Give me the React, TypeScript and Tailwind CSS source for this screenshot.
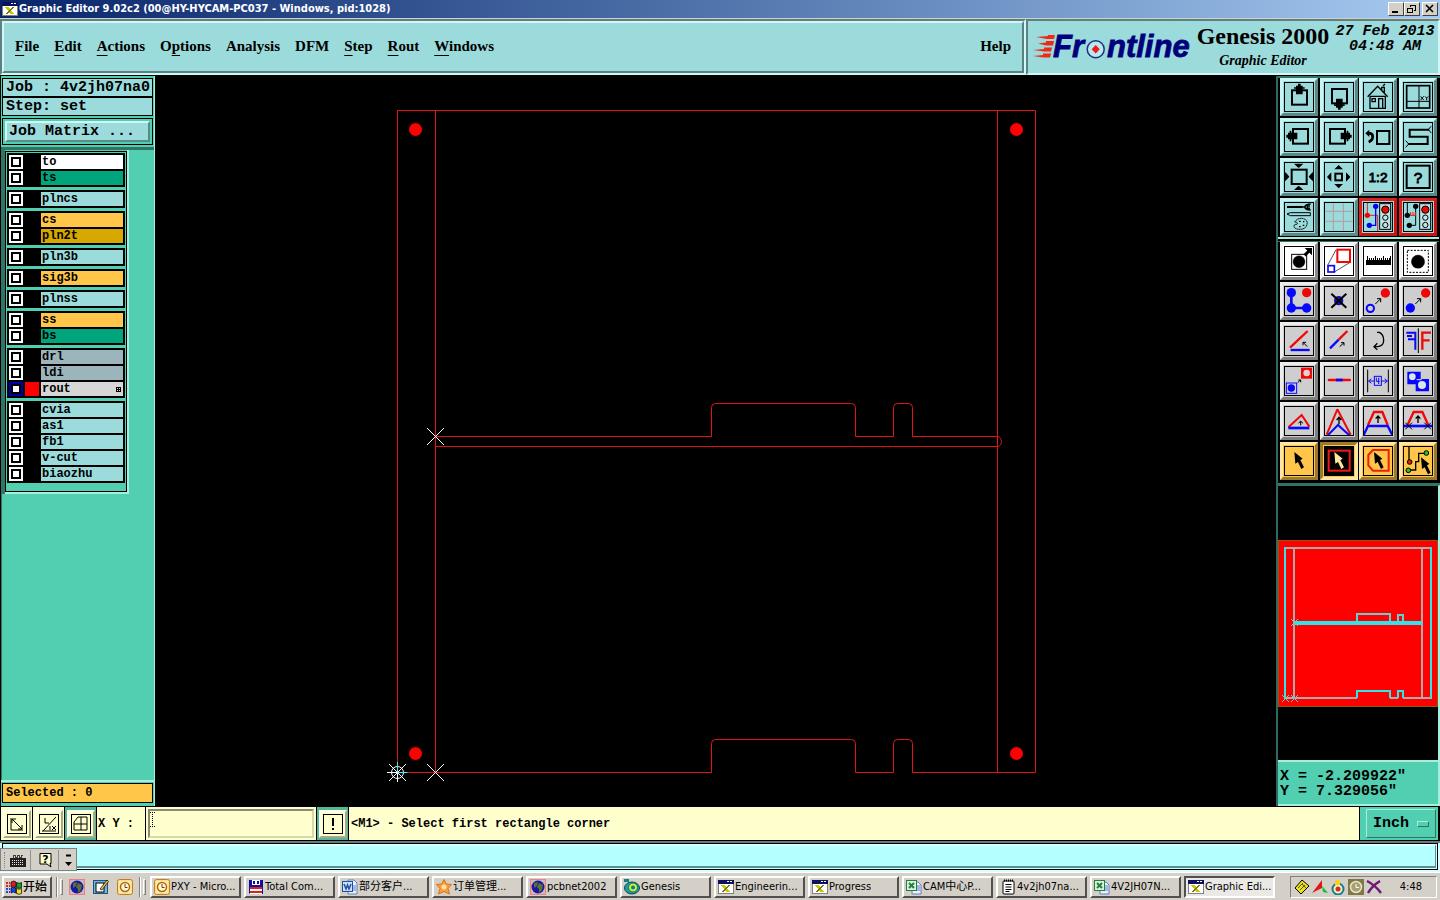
import React from "react";

const mono = "font-['Liberation_Mono','DejaVu_Sans_Mono',monospace]";
const serif = "font-['Liberation_Serif',serif]";
const tahoma = "font-['DejaVu_Sans_Condensed','DejaVu_Sans','Noto_Sans_CJK_SC',sans-serif]";

/* ---------- Title bar ---------- */

function WindowGlyph() {
  return (
    <svg viewBox="0 0 16 16" className="size-4 shrink-0" shapeRendering="crispEdges" aria-hidden="true">
      <rect x="0" y="1" width="16" height="14" fill="#808080" />
      <rect x="1" y="5" width="14" height="9" fill="#fff" />
      <rect x="0" y="1" width="16" height="4" fill="#101060" />
      <rect x="9" y="2" width="2" height="1" fill="#fff" />
      <rect x="12" y="2" width="2" height="1" fill="#fff" />
      <path d="M4 6 10 13M5 6 11 13" stroke="#c8c800" strokeWidth="2" />
      <path d="M11.500 6 4.500 13" stroke="#75751a" strokeWidth="1.500" />
    </svg>
  );
}

function CaptionButton({ label, children }: { label: string; children: React.ReactNode }) {
  return (
    <button
      aria-label={label}
      className="h-[14px] w-4 border border-t-white border-l-white border-r-[#404040] border-b-[#404040] bg-[#d4d0c8]"
    >
      <svg viewBox="0 0 14 12" className="h-3 w-[14px]" fill="none" stroke="#000" shapeRendering="crispEdges">
        {children}
      </svg>
    </button>
  );
}

function TitleBar() {
  return (
    <div className="flex h-[19px] items-center border-b border-[#d4d0c8] bg-linear-to-r from-[#0a246a] to-[#a6caf0] pr-[2px] pl-[2px]">
      <WindowGlyph />
      <h1 className={`${tahoma} ml-px flex-1 text-[11px] leading-[18px] font-bold whitespace-nowrap text-white`}>
        Graphic Editor 9.02c2 (00@HY-HYCAM-PC037 - Windows, pid:1028)
      </h1>
      <div className="flex">
        <CaptionButton label="Minimize">
          <path d="M3 9h6" strokeWidth="2" />
        </CaptionButton>
        <CaptionButton label="Restore">
          <path d="M5 2h6M5 5.500h-3v4h5v-4h-3M5.500 4v-2M10.500 2v5h-2M2 5h6" strokeWidth="1" />
        </CaptionButton>
        <div className="w-[2px]" />
        <CaptionButton label="Close">
          <path d="M3 2l7 7M10 2l-7 7" strokeWidth="1.600" shapeRendering="auto" />
        </CaptionButton>
      </div>
    </div>
  );
}

/* ---------- Header ---------- */

const menus = [
  ["", "F", "ile"],
  ["", "E", "dit"],
  ["", "A", "ctions"],
  ["O", "p", "tions"],
  ["Analysis", "", ""],
  ["DFM", "", ""],
  ["", "S", "tep"],
  ["", "R", "out"],
  ["", "W", "indows"],
];

const sunken = "border-2 border-t-[#5f8080] border-l-[#5f8080] border-r-[#d0f8f8] border-b-[#d0f8f8]";
const raised = "border-2 border-t-[#d0f8f8] border-l-[#d0f8f8] border-r-[#5a8080] border-b-[#5a8080]";

function FrontlineLogo() {
  return (
    <svg viewBox="1030 22 164 48" className="h-12 w-[164px] shrink-0 overflow-visible" role="img" aria-label="Frontline">
      <g fill="#f02818">
        <path d="M1036 37 1048 36V35l7 0-1 4h-7z" />
        <path d="M1038 43.500 1046 42.500v-1.500h8l-1 4.500h-7z" />
        <path d="M1033 50 1044 49v-1.500h8l-1 4h-7z" />
        <path d="M1033 56 1043 55v-1.500h8l-1 4h-7z" />
      </g>
      <g
        fill="#00007c"
        stroke="#00007c"
        strokeWidth=".8"
        fontFamily="Liberation Sans, sans-serif"
        fontWeight="bold"
        fontStyle="italic"
        fontSize="31"
      >
        <text x="1053" y="57">Fr</text>
        <text x="1107" y="57">ntline</text>
      </g>
      <circle cx="1095.700" cy="49.300" r="8.500" fill="#b8e8e8" stroke="#20308c" strokeWidth="1.500" />
      <path d="M1095.700 45l4 4.300-4 4.300-4-4.300z" fill="#f01818" />
    </svg>
  );
}

function Header() {
  return (
    <header className="flex h-14 bg-[#9cdbdb]">
      <div className={`${sunken} flex min-w-0 flex-1`}>
        <nav className={`${raised} ${serif} flex flex-1 items-center gap-[15px] px-[11px] pb-[2px] text-[15px] font-bold`}>
          {menus.map(([before, key, after]) => (
            <button key={before + key + after} className="leading-5">
              {before}
              {key && <span className="underline underline-offset-4">{key}</span>}
              {after}
            </button>
          ))}
          <button className="ml-auto leading-5">Help</button>
        </nav>
      </div>
      <div className={`${sunken} flex shrink-0 pl-[2px]`}>
        <div className="pt-px">
          <FrontlineLogo />
        </div>
        <div className={`${serif} flex w-[138px] flex-col items-center`}>
          <div className="text-2xl leading-[30px] font-bold whitespace-nowrap">Genesis 2000</div>
          <div className="text-sm leading-5 font-bold italic">Graphic Editor</div>
        </div>
        <div className={`${mono} w-[106px] pt-[3px] text-center text-[15px] leading-[15px] font-bold whitespace-nowrap italic`}>
          <div>27 Feb 2013</div>
          <div>04:48 AM</div>
        </div>
      </div>
    </header>
  );
}

/* ---------- Layer panel ---------- */

type Layer = { name: string; tone: string; active?: boolean };
const aqua = "bg-[#9cdbdb]";
const amber = "bg-[#ffc64a]";
const layerGroups: Layer[][] = [
  [{ name: "to", tone: "bg-white" }, { name: "ts", tone: "bg-[#00a57b]" }],
  [{ name: "plncs", tone: aqua }],
  [{ name: "cs", tone: amber }, { name: "pln2t", tone: "bg-[#d6a800]" }],
  [{ name: "pln3b", tone: aqua }],
  [{ name: "sig3b", tone: amber }],
  [{ name: "plnss", tone: aqua }],
  [{ name: "ss", tone: amber }, { name: "bs", tone: "bg-[#00a57b]" }],
  [
    { name: "drl", tone: "bg-[#9cb5bd]" },
    { name: "ldi", tone: "bg-[#9cb5bd]" },
    { name: "rout", tone: "bg-[#d6d6d6]", active: true },
  ],
  [
    { name: "cvia", tone: aqua },
    { name: "as1", tone: aqua },
    { name: "fb1", tone: aqua },
    { name: "v-cut", tone: aqua },
    { name: "biaozhu", tone: aqua },
  ],
];

function LayerRow({ layer }: { layer: Layer }) {
  return (
    <label className="flex h-4 items-center gap-[2px] pr-[2px] pl-[2px]">
      <input
        type="checkbox"
        defaultChecked={layer.active}
        className={`size-[14px] shrink-0 appearance-none border-2 bg-white shadow-[inset_0_0_0_2px_#000] ${
          layer.active ? "border-[#0000a8]" : "border-white"
        }`}
      />
      <span className={`size-[14px] shrink-0 ${layer.active ? "bg-[#ff0000]" : "bg-black"}`} />
      <span className={`flex h-[14px] flex-1 items-center justify-between pr-[2px] pl-px text-xs leading-[14px] font-bold ${layer.tone}`}>
        {layer.name}
        {layer.active && (
          <svg viewBox="0 0 5 5" className="size-[5px]" shapeRendering="crispEdges" aria-hidden="true">
            <path d="M.5.5h4v4h-4zM2.500 0v5M0 2.500h5" fill="none" stroke="#000" />
          </svg>
        )}
      </span>
    </label>
  );
}

function LayerPanel() {
  return (
    <aside className={`${mono} flex w-[155px] shrink-0 flex-col border-r border-l border-l-black border-r-[#a5efde] bg-[#52ceb0]`}>
      <div className="flex flex-col gap-[2px] border-b-[3px] border-[#2f7464] px-px pt-[2px] pb-[2px]">
        <div className="border border-black bg-[#9cdbdb] text-[15px] leading-[17px] font-bold whitespace-nowrap">
          <div className="border-b-2 border-black px-[3px]">Job : 4v2jh07na0</div>
          <div className="px-[3px]">Step: set</div>
        </div>
        <div className="flex border border-black p-[2px]">
          <button className="h-[21px] w-full border-2 border-t-[#d0f8f8] border-r-[#5a8a8a] border-b-[#5a8a8a] border-l-[#d0f8f8] bg-[#9cdbdb] px-[2px] text-left text-[15px] leading-[17px] font-bold">
            Job Matrix ...
          </button>
        </div>
      </div>
      <div className="flex flex-1 flex-col">
        <div className="flex">
          <div className="w-1 bg-[#2f7464]" />
          <div className="w-[124px] border-r-2 border-b-2 border-[#a5efde] pt-px">
            <fieldset className="flex flex-col gap-[3px] border border-black px-px pt-px pb-2">
              {layerGroups.map((group) => (
                <div key={group[0].name} className="bg-black py-px">
                  {group.map((layer) => (
                    <LayerRow key={layer.name} layer={layer} />
                  ))}
                </div>
              ))}
            </fieldset>
          </div>
        </div>
        <div className="w-px flex-1 bg-[#2f7464]" />
      </div>
      <div className="border-t-2 border-[#a5efde] px-px pt-px pb-[3px]">
        <div className="border border-black bg-[#ffc64a] px-[3px] text-xs leading-[18px] font-bold">Selected : 0</div>
      </div>
    </aside>
  );
}

/* ---------- Board drawing ---------- */

function BoardCanvas() {
  return (
    <main className="flex min-w-0 flex-1 flex-col bg-black">
      <svg viewBox="155 76 1121 730" className="min-h-0 w-full flex-1 basis-0" fill="none" role="img" aria-label="Rout layer drawing">
        <g stroke="#e01414" strokeWidth="1">
          <path d="M435.500 772.500H397.500V110.500H1035.500V772.500H912.500V743.500q0-4-4-4h-11q-4 0-4 4V772.500H855.500V743.500q0-4-4-4H715.500q-4 0-4 4V772.500H397.500" />
          <path d="M435.500 110V772M997.500 110V772" />
          <path d="M435.500 436.500H711.500V407.500q0-4 4-4H851.500q4 0 4 4V436.500H893.500V407.500q0-4 4-4h11q4 0 4 4V436.500H997.500a4 5 0 0 1 0 10H435.500" />
        </g>
        <g fill="#f00">
          <circle cx="415.500" cy="129.500" r="6.500" />
          <circle cx="1016.500" cy="129.500" r="6.500" />
          <circle cx="415.500" cy="753.500" r="6.500" />
          <circle cx="1016.500" cy="753.500" r="6.500" />
        </g>
        <g stroke="#fff" strokeWidth="1">
          <path d="M427 428l17 17M444 428l-17 17M427 764l17 17M444 764l-17 17" />
          <path d="M389 764l17 17M406 764l-17 17M387 772.500h10M397.500 762v20" />
          <circle cx="397.500" cy="772.500" r="6" />
        </g>
        <path d="M397.500 772.500h10M397.500 762v10" stroke="#40e8e8" />
      </svg>
    </main>
  );
}

/* ---------- Tool palette ---------- */

const Cursor = ({ x = 31, y = 18, fill = "#000" }: { x?: number; y?: number; fill?: string }) => (
  <path
    transform={`translate(${x} ${y})`}
    d="M0 0 L25 20 L18 24 L29 46 L21 51 L11 30 L3 35 Z"
    fill={fill}
    stroke="none"
  />
);
const SmallArrow = ({ x, y }: { x: number; y: number }) => (
  <path transform={`translate(${x} ${y})`} d="M0 16 16 0M5 0h11v11" strokeWidth="3" />
);
const UpArrow = ({ y }: { y: number }) => <path transform={`translate(45 ${y})`} d="M0 0v21M-7 8 0 0 7 8" strokeWidth="4" />;

function TrafficLight() {
  return (
    <>
      <rect x="50" y="5" width="33" height="77" fill="#bfe6e6" strokeWidth="3" />
      <circle cx="67" cy="23" r="11" fill="#f00808" strokeWidth="3" />
      <circle cx="67" cy="47" r="8" fill="#bfe6e6" strokeWidth="3" />
      <circle cx="67" cy="69" r="8" fill="#bfe6e6" strokeWidth="3" />
    </>
  );
}

type Tool = { name: string; art: React.ReactNode };

const viewTools: Tool[] = [
  { name: "Pan up", art: <><rect x="24" y="25" width="45" height="43" strokeWidth="6" /><path d="M36 37V20h-6v-4h6v-5h6V5h8v6h6v5h6v4h-6v17z" fill="#000" stroke="none" /></> },
  { name: "Pan down", art: <><rect x="24" y="21" width="45" height="43" strokeWidth="6" /><path d="M36 50v17h-6v5h6v5h6v6h8v-6h6v-5h6v-5h-6V50z" fill="#000" stroke="none" /></> },
  { name: "Home view", art: <><path d="M14 44 44 13 74 44M21 43v36h46V43M21 43h46M47 79V50h12v29M27 50h10v9H27zM56 24V16h8v16M60 12l6-6" strokeWidth="4" /></> },
  { name: "Zoom by coordinates", art: <><rect x="11" y="11" width="69" height="67" strokeWidth="5" /><path d="M48 10v68M10 58h70" strokeWidth="3" /><path d="M53 43l9 11M62 43l-9 11M66 43l5 5 5-5M71 48v7" strokeWidth="3" /></> },
  { name: "Pan left", art: <><rect x="27" y="21" width="45" height="44" strokeWidth="6" /><path d="M40 32H22v-6h-5v6h-5v6H7v9h5v5h5v6h5v-6h18z" fill="#000" stroke="none" /></> },
  { name: "Pan right", art: <><rect x="18" y="21" width="45" height="44" strokeWidth="6" /><path d="M50 32h18v-6h5v6h5v6h5v9h-5v5h-5v6h-5v-6H50z" fill="#000" stroke="none" /></> },
  { name: "Previous view", art: <><rect x="42" y="27" width="37" height="39" strokeWidth="6" /><path d="M14 34h8q8 2 7 12t-12 14" strokeWidth="8" /><path d="M7 34l12-11v22z" fill="#000" stroke="none" /></> },
  { name: "Serpentine view", art: <><path d="M79 23H20V44H74V66H15" strokeWidth="6" /><path d="M76 23l8-10M76 23l9 10M17 66l-9-10M17 66l-9 10" strokeWidth="3" /></> },
  { name: "Zoom in", art: <><rect x="23" y="23" width="45" height="43" strokeWidth="6" /><path d="M30 5h28l-7 7-7 6-7-6zM30 84h28l-7-7-7-6-7 6zM3 30v28l7-7 6-7-6-7zM87 30v28l-7-7-6-7 6-7z" fill="#000" stroke="none" /></> },
  { name: "Zoom out", art: <><rect x="34" y="35" width="20" height="20" strokeWidth="6" /><path d="M31 22h26l-7-7-6-6-6 6zM31 66h26l-7 7-6 6-6-6zM22 31v28l-7-7-6-7 6-7zM66 31v28l7-7 6-7-6-7z" fill="#000" stroke="none" /></> },
  { name: "Scale one to two", art: <text x="45" y="59" textAnchor="middle" fontFamily="Liberation Sans, sans-serif" fontSize="41" fill="#000" strokeWidth="2.500">1:2</text> },
  { name: "Query", art: <><rect x="11" y="11" width="69" height="67" strokeWidth="6" /><text x="45" y="62" textAnchor="middle" fontFamily="Liberation Sans, sans-serif" fontSize="46" fill="#000" strokeWidth="2.500">?</text></> },
  { name: "Preferences", art: <><path d="M9 15h46" strokeWidth="6" /><path d="M52 15h10q3-9 18-9M62 15q3 9 18 9M78 12h-8v7h8" strokeWidth="5" /><path d="M9 36l10-4h60v9H19z" strokeWidth="3" /><path d="M32 60q10-14 26-10 14 4 11 17-3 14-20 15-18 0-19-9 0-7 9-6 4-3-3-7z" strokeWidth="3" strokeDasharray="5 1" /><path d="M45 58h5M57 59h4M56 70h5M45 74h5" strokeWidth="4" /></> },
  { name: "Grid", art: <path d="M28 4v82M58 4v82M4 28h82M4 58h82" stroke="#b49ca0" strokeWidth="3" /> },
  { name: "Display nets", art: <><path d="M13 3v37h31v47" stroke="#e02020" strokeWidth="3" /><path d="M38 13v57H19" stroke="#0000f0" strokeWidth="4" /><circle cx="13" cy="40" r="8" fill="#f00808" stroke="none" /><circle cx="38" cy="13" r="8" fill="#0000f0" stroke="none" /><circle cx="19" cy="70" r="8" fill="#0000f0" stroke="none" /><TrafficLight /></> },
  { name: "Display components", art: <><path d="M13 3v37h8M38 13v57H19" strokeWidth="3" /><path d="M21 40h18M23 40V30M30 40V30M37 40V30" stroke="#e02020" strokeWidth="3" /><circle cx="13" cy="40" r="8" fill="#000" stroke="none" /><circle cx="38" cy="13" r="8" fill="#000" stroke="none" /><circle cx="19" cy="70" r="8" fill="#000" stroke="none" /><TrafficLight /></> },
];

const RED = "#f00808";
const BLUE = "#0808ff";

const editTools: Tool[] = [
  { name: "Add feature", art: <><rect x="23" y="25" width="45" height="45" strokeWidth="3" /><circle cx="45" cy="47" r="18" fill="#000" /><path d="M62 28l14-14" strokeWidth="9" /><path d="M62 6h22v22z" fill="#000" stroke="none" /></> },
  { name: "Copy scale", art: <><path d="M11 58 36 11M31 78 80 48" strokeWidth="2" /><rect x="40" y="11" width="38" height="37" stroke={RED} strokeWidth="6" /><rect x="12" y="59" width="19" height="19" stroke={BLUE} strokeWidth="5" /></> },
  { name: "Measure", art: <g shapeRendering="crispEdges"><rect x="10" y="42" width="74" height="14" fill="#000" stroke="none" /><path d="M12 31v12M18 36v7M24 36v7M30 36v7M36 31v12M42 36v7M48 36v7M54 36v7M60 31v12M66 36v7M72 36v7M78 36v7M83 31v12" strokeWidth="3" /></g> },
  { name: "Select feature", art: <><rect x="13" y="13" width="63" height="66" strokeWidth="3" strokeDasharray="6 4" /><circle cx="45" cy="47" r="20" fill="#000" /></> },
  { name: "Connect", art: <><path d="M22 20v46h46" stroke={BLUE} strokeWidth="8" /><g stroke="none" fill={BLUE}><circle cx="22" cy="20" r="14" /><circle cx="22" cy="66" r="14" /><circle cx="68" cy="66" r="14" /><circle cx="68" cy="20" r="14" fill={RED} /></g></> },
  { name: "Delete", art: <><circle cx="44" cy="44" r="14" fill="#1010b0" stroke="none" /><path d="M22 23l45 42M67 23 22 65" strokeWidth="6" /></> },
  { name: "Move", art: <><circle cx="67" cy="21" r="14" fill={RED} stroke="none" /><circle cx="22" cy="67" r="11" stroke={BLUE} strokeWidth="6" /><SmallArrow x={37} y={38} /></> },
  { name: "Copy", art: <><circle cx="68" cy="21" r="14" fill={RED} stroke="none" /><circle cx="22" cy="66" r="14" fill={BLUE} stroke="none" /><SmallArrow x={37} y={38} /></> },
  { name: "Change angle", art: <><path d="M18 65 71 15" stroke={RED} strokeWidth="7" /><path d="M20 72h57" stroke={BLUE} strokeWidth="7" /><path d="M70 62 57 49M57 58v-9h9" strokeWidth="3" /></> },
  { name: "Extend line", art: <><path d="M18 67l26-26" stroke={BLUE} strokeWidth="7" /><path d="M44 41l26-26" stroke={RED} strokeWidth="7" /><path d="M47 62l13-12M51 50h9v9" strokeWidth="3" /></> },
  { name: "Rotate", art: <path d="M42 19h7q13 6 13 24 0 17-17 19H34M43 52 33 62l10 9" strokeWidth="4" /> },
  { name: "Mirror", art: <><path d="M10 20h27v51M15 40h22M12 30h15" stroke={BLUE} strokeWidth="6" /><path d="M46 7v74" strokeWidth="3" /><path d="M58 71V20h26M58 43h22" stroke={RED} strokeWidth="7" /></> },
  { name: "Resize", art: <><rect x="51" y="5" width="33" height="33" fill={RED} stroke="none" /><circle cx="68" cy="21" r="10" fill="#e8d0d0" stroke="none" /><rect x="7" y="51" width="31" height="31" stroke={BLUE} strokeWidth="3" /><circle cx="22" cy="66" r="11" fill={BLUE} stroke="none" /><path d="M41 50l8-8M43 42h7v7" strokeWidth="3" /></> },
  { name: "Break line", art: <><path d="M15 42h62" stroke={RED} strokeWidth="8" strokeLinecap="round" /><path d="M36 42h20" stroke={BLUE} strokeWidth="8" /></> },
  { name: "Spacing", art: <><path d="M14 11v68M76 11v68" strokeWidth="3" /><g stroke={BLUE} strokeWidth="3"><rect x="34" y="31" width="21" height="27" /><path d="M34 45H17M25 38l-8 7 8 7M55 45h18M65 38l8 7-8 7M40 35v11h10M47 35v19" /></g></> },
  { name: "Surface", art: <><path d="M13 17h40v22h25v37H38V55H13z" fill={BLUE} stroke="none" /><circle cx="28" cy="32" r="10" fill="#d8e8e8" stroke="none" /><circle cx="57" cy="57" r="12" fill="#d8e8e8" stroke="none" /><path d="M41 41h15" stroke="#d8e8e8" strokeWidth="3" /></> },
  { name: "Triangle edit", art: <><path d="M13 64 53 27 76 62" stroke={RED} strokeWidth="6" /><path d="M13 66h63" stroke={BLUE} strokeWidth="8" /><path d="M50 58V46M43 52l7-7 7 7" strokeWidth="3" /></> },
  { name: "Vertex edit", art: <><path d="M8 86 40 10 80 86" stroke={RED} strokeWidth="6" strokeLinejoin="bevel" /><path d="M11 88 42 57 76 88" stroke={BLUE} strokeWidth="6" /><UpArrow y={34} /></> },
  { name: "Segment edit", art: <><path d="M15 57 33 18H58L74 57" stroke={RED} strokeWidth="7" /><path d="M2 87 15 60H74L88 87" stroke={BLUE} strokeWidth="7" /><UpArrow y={30} /></> },
  { name: "Slide segment", art: <><path d="M13 58 32 18H58L76 58" stroke={RED} strokeWidth="7" /><path d="M2 60h86" stroke={BLUE} strokeWidth="8" /><path d="M7 50l20 20M27 50 7 70M64 50l20 20M84 50 64 70" strokeWidth="3" /><UpArrow y={30} /></> },
];

const selectTools: Tool[] = [
  { name: "Select single", art: <Cursor /> },
  { name: "Select rectangle", art: <><rect width="90" height="90" fill="#000" stroke="none" /><rect x="14" y="14" width="63" height="60" stroke="#f01818" strokeWidth="6" /><Cursor fill="#ffe6a0" /></> },
  { name: "Select polygon", art: <><path d="M30 12h47v62H30L16 58V27z" stroke="#f02008" strokeWidth="6" /><Cursor x={33} /></> },
  { name: "Select net", art: <><path d="M18 2v44M16 72h22V47h9V22h20" strokeWidth="4" /><circle cx="20" cy="48" r="7" fill="#e02000" strokeWidth="3" /><circle cx="16" cy="73" r="7" fill="#20c820" strokeWidth="3" /><circle cx="70" cy="21" r="7" fill="#20c820" strokeWidth="3" /><Cursor x={54} y={34} /></> },
];

const skins = {
  aqua: "border-t-[#c8f4f4] border-l-[#c8f4f4] border-r-[#5c8888] border-b-[#5c8888] bg-[#9cdbdb]",
  red: "border-t-[#e02020] border-l-[#e02020] border-r-[#c81414] border-b-[#c81414] bg-[#9cdbdb]",
  white: "border-t-[#f4f4f4] border-l-[#f4f4f4] border-r-[#8a8a8a] border-b-[#8a8a8a] bg-white",
  gray: "border-t-[#ececec] border-l-[#ececec] border-r-[#808080] border-b-[#808080] bg-[#cecece]",
  amber: "border-t-[#ffe6a8] border-l-[#ffe6a8] border-r-[#9a7a30] border-b-[#9a7a30] bg-[#ffc64a]",
  amberPressed: "border-t-[#9a7a30] border-l-[#9a7a30] border-r-[#ffe6a8] border-b-[#ffe6a8] bg-[#ffc64a]",
};

function ToolButton({ tool, skin }: { tool: Tool; skin: keyof typeof skins }) {
  return (
    <button aria-label={tool.name} className={`size-[38px] border-[3px] p-px ${skins[skin]}`}>
      <svg viewBox="0 0 90 90" className="size-[30px]" fill="none" stroke="#000">
        {tool.art}
        <rect x="1.500" y="1.500" width="87" height="87" strokeWidth="3" />
      </svg>
    </button>
  );
}

function Minimap() {
  return (
    <svg viewBox="1278 486 160 274" className="min-h-0 w-full flex-1 basis-0 bg-black" fill="none" role="img" aria-label="Board overview">
      <rect x="1278.500" y="540.500" width="159" height="166" fill="#f00" stroke="#905808" />
      <g strokeWidth="2">
        <path d="M1285 548h146M1294 548v150M1422 548v150M1285 698h72M1390 698h8M1403 698h28" stroke="#b4a8a8" />
        <path d="M1285 547v152M1431 547v152M1357 698v-7h33v7M1398 698v-7h5v7" stroke="#30e4ec" />
        <path d="M1357 622v-8h33v8M1398 622v-7h5v7" stroke="#60d0d0" />
        <path d="M1294 623h128" stroke="#30e4ec" strokeWidth="4" />
      </g>
      <path d="M1282 695l7 7M1289 695l-7 7M1291 695l7 7M1298 695l-7 7M1291 619l7 7M1298 619l-7 7" stroke="#70c8c8" />
    </svg>
  );
}

function Sidebar() {
  return (
    <aside className="flex w-[164px] shrink-0 flex-col border-l-2 border-[#2f6a60] bg-black">
      <div className="flex flex-col border-t-2 border-b-2 border-[#2f7464] pr-px">
        <div className="grid grid-cols-4 justify-items-center gap-y-[2px] border-b-2 border-[#a5efde] px-px pb-px">
          {viewTools.map((tool, i) => (
            <ToolButton key={tool.name} tool={tool} skin={i > 13 ? "red" : "aqua"} />
          ))}
        </div>
        <div className="mt-[2px] grid grid-cols-4 justify-items-center gap-y-[2px] border-t border-[#2f7464] px-px pb-[3px]">
          {editTools.map((tool, i) => (
            <ToolButton key={tool.name} tool={tool} skin={i < 4 ? "white" : "gray"} />
          ))}
          {selectTools.map((tool, i) => (
            <ToolButton key={tool.name} tool={tool} skin={i === 1 ? "amberPressed" : "amber"} />
          ))}
        </div>
      </div>
      <div className="flex flex-1 flex-col border-t border-r-2 border-r-[#a5efde] border-t-[#2f7464]">
        <Minimap />
      </div>
      <div className={`${mono} border-2 border-l-0 border-t-[#a5efde] border-r-[#a5efde] border-b-[#a5efde] bg-[#52ceb0] pt-[7px] pb-[5px] pl-[2px] text-[15px] leading-[15px] font-bold`}>
        <div>X = -2.209922&quot;</div>
        <div>Y = 7.329056&quot;</div>
      </div>
    </aside>
  );
}

/* ---------- Command row ---------- */

function ModeButton({ name, teal, children }: { name: string; teal?: boolean; children: React.ReactNode }) {
  return (
    <button
      aria-label={name}
      type="button"
      className={`flex w-[31px] shrink-0 items-center justify-center ${teal ? "bg-[#52b898]" : "bg-[#ffffce]"}`}
    >
      <span className="block border-2 border-t-[#fffff0] border-r-[#a8a88a] border-b-[#a8a88a] border-l-[#fffff0] bg-[#ffffce] p-[2px]">
        <svg viewBox="0 0 20 20" className="size-5" fill="none" stroke="#000" strokeWidth="1">
          <rect x=".5" y=".5" width="19" height="19" />
          {children}
        </svg>
      </span>
    </button>
  );
}

function CommandRow() {
  return (
    <form className={`${mono} flex h-[35px] gap-px border-t border-b border-black bg-black pr-[2px] pl-px text-xs font-bold`}>
      <ModeButton name="Absolute mode">
        <path d="M4 4v12h12M5 5l10 10M5 9V5h4M11 15h4v-4" />
      </ModeButton>
      <ModeButton name="Angle mode">
        <path d="M3 17h14M4 17 17 3M6 4v5h4M11 12v4M13 16l4-4M13 12l4 4" />
      </ModeButton>
      <ModeButton name="Snap mode" teal>
        <path d="M7 3h9v13H3V8zM3 10h13M10 3v13" />
      </ModeButton>
      <label htmlFor="coords" className="flex w-12 shrink-0 items-center bg-[#ffffce] pl-px text-xs whitespace-nowrap">
        X Y :
      </label>
      <div className="relative flex w-[170px] shrink-0 bg-[#ffffce] p-[2px]">
        <input
          id="coords"
          className="w-full border-2 border-t-[#8a8a70] border-r-[#d8d8b0] border-b-[#d8d8b0] border-l-[#8a8a70] bg-[#ffffce] px-1 outline-none"
        />
        <svg viewBox="0 0 5 15" className="pointer-events-none absolute top-[5px] left-1 h-[15px] w-[5px]" fill="none" stroke="#000" aria-hidden="true">
          <path d="M2.500 0v15M0 .5h5M0 14.500h5" strokeDasharray="1 1" />
        </svg>
      </div>
      <ModeButton name="Interrupt" teal>
        <path d="M10 4v8M10 14v2" strokeWidth="2" />
      </ModeButton>
      <output className="flex min-w-0 flex-1 items-center bg-[#ffffce] pl-[2px] whitespace-nowrap">
        &lt;M1&gt; - Select first rectangle corner
      </output>
      <div className="flex w-[78px] bg-[#52ceb0] pt-[2px] pr-[2px] pb-[2px] pl-[6px]">
        <button type="button" className="flex flex-1 items-center justify-between border border-t-[#a5efde] border-r-[#2f7464] border-b-[#2f7464] border-l-[#a5efde] px-[6px] text-[15px] font-bold">
          Inch
          <span className="h-[6px] w-3 border border-t-[#a5efde] border-r-[#2f7464] border-b-[#2f7464] border-l-[#a5efde]" />
        </button>
      </div>
    </form>
  );
}

/* ---------- Status strip with floating input-method bar ---------- */

function StatusStrip() {
  return (
    <div className="relative border-t-2 border-[#5f8080] bg-[#d8ffff] pr-[2px] pb-[2px] pl-[2px]">
      <div className="border border-black bg-[#d8ffff] pr-px pb-px">
        <div className="h-6 border-t-2 border-r border-b-2 border-t-[#e0ffff] border-r-[#5a9090] border-b-[#5a9090] bg-[#b4ffff]" />
      </div>
      <div className="absolute top-[5px] left-0 flex h-[23px] items-center border border-[#808080] bg-[#d4d0c8] pl-[3px]">
        <span className="mr-[5px] h-4 w-px border-l border-dotted border-[#808080]" />
        <button aria-label="Keyboard" className="flex">
          <svg viewBox="0 0 16 16" className="size-4" shapeRendering="crispEdges">
            <rect x="0" y="6" width="16" height="9" rx="1" fill="#202020" />
            <path d="M2 8.500h12M2 10.500h12M2 12.500h12" stroke="#e8e8e0" strokeDasharray="1 1" />
            <path d="M3 6V3h2v2h2V3h2v2h2V3h2" fill="none" stroke="#404040" />
          </svg>
        </button>
        <span className="mr-[7px] ml-1 h-5 w-px bg-[#909090]" />
        <button aria-label="Help" className="flex">
          <svg viewBox="0 0 16 16" className="size-4">
            <path d="M2 1.500h11v10h-1l1 3.500-4-3H2z" fill="#ffffcc" stroke="#000" />
            <text x="7.500" y="11" textAnchor="middle" fontFamily="DejaVu Sans, sans-serif" fontWeight="bold" fontSize="11">?</text>
          </svg>
        </button>
        <span className="mr-[5px] ml-1 h-5 w-px bg-[#909090]" />
        <button aria-label="Options" className="mr-1 flex">
          <svg viewBox="0 0 8 16" className="h-4 w-2">
            <path d="M2 3.500h5" stroke="#000" strokeWidth="2" />
            <path d="M1 10h7l-3.500 4z" />
          </svg>
        </button>
      </div>
    </div>
  );
}

/* ---------- Taskbar ---------- */

const Clock = () => (
  <>
    <rect x=".5" y=".5" width="15" height="15" rx="2" fill="#f8dc90" stroke="#c08020" />
    <rect x="2" y="2" width="12" height="12" fill="#ffe8a8" />
    <circle cx="8" cy="8" r="4.500" fill="#fff8e0" stroke="#b06808" strokeWidth="1.500" />
    <path d="M8 5v3.500h2.500" fill="none" stroke="#704000" />
  </>
);
const Globe = () => (
  <>
    <rect x=".5" y=".5" width="15" height="15" fill="#c8b8c8" stroke="#f08080" />
    <circle cx="8" cy="8" r="6.500" fill="#1818a0" />
    <path d="M4 4l4-1-1 4-3 2zM9 4l4 2-1 5-3 3 0-4-2-2z" fill="#5c7030" />
  </>
);
const Sheet = () => (
  <>
    <path d="M6 3h6l3 3v9H6z" fill="#e8f0ff" stroke="#6080c0" />
    <path d="M11 7h3M11 9h3M11 11h3" stroke="#6080c0" />
    <rect x=".5" y="1.500" width="10" height="10" fill="#e0f0d8" stroke="#208040" />
    <path d="M3 4l5 5M8 4 3 9" stroke="#208040" strokeWidth="2" />
  </>
);
const WordDoc = () => (
  <>
    <path d="M6 1h6l3 3v11H6z" fill="#e8f0ff" stroke="#6080c0" />
    <path d="M11 7h3M11 9h3M11 11h3" stroke="#6080c0" />
    <rect x=".5" y="2.500" width="10" height="10" fill="#d0e0f8" stroke="#2050a0" />
    <path d="M2 5l2 5 1.500-4L7 10l2-5" fill="none" stroke="#2050a0" strokeWidth="1.500" />
  </>
);
const Floppy = () => (
  <>
    <path d="M1 1h14v14H2l-1-1z" fill="#1010a0" />
    <rect x="4" y="1" width="8" height="5" fill="#fff" />
    <rect x="5" y="2" width="2" height="3" fill="#1010a0" />
    <rect x="9" y="2" width="2" height="3" fill="#1010a0" />
    <rect x="2" y="8" width="12" height="7" fill="#fff" />
    <path d="M2 9h12M2 13h12" stroke="#e02020" strokeWidth="2" />
  </>
);
const Star = () => (
  <>
    <path d="M8 .5l2.300 4.500 5.200.5-3.500 4 1.500 5.500L8 12.500 2.500 15 4 9.500.5 5.500l5.200-.5z" fill="#f8a040" stroke="#e07010" />
    <circle cx="8" cy="8" r="2.500" fill="#ffe0a0" />
  </>
);
const Eye = () => (
  <>
    <path d="M0 0h5v3H0z" fill="#108080" />
    <ellipse cx="8" cy="9" rx="7.500" ry="6" fill="#18a0a0" stroke="#104060" />
    <circle cx="9" cy="8.500" r="4.500" fill="#c8f040" stroke="#107060" />
    <circle cx="9" cy="8.500" r="2" fill="#107890" />
  </>
);
const Notepad = () => (
  <>
    <rect x="3" y="2" width="11" height="13" rx="1" fill="#fff" stroke="#000" />
    <path d="M4 1.500h9" stroke="#000" strokeDasharray="1 1" strokeWidth="2" />
    <path d="M5.500 5.500h6M5.500 8h6M5.500 10.500h6M5.500 12.500h4" stroke="#000" />
  </>
);

function Pic({ children }: { children: React.ReactNode }) {
  return (
    <svg viewBox="0 0 16 16" className="size-4 shrink-0" aria-hidden="true">
      {children}
    </svg>
  );
}

const tasks: { label: string; icon: React.ReactNode; active?: boolean }[] = [
  { label: "PXY - Micro...", icon: <Pic><Clock /></Pic> },
  { label: "Total Com...", icon: <Pic><Floppy /></Pic> },
  { label: "部分客户...", icon: <Pic><WordDoc /></Pic> },
  { label: "订单管理...", icon: <Pic><Star /></Pic> },
  { label: "pcbnet2002", icon: <Pic><Globe /></Pic> },
  { label: "Genesis", icon: <Pic><Eye /></Pic> },
  { label: "Engineerin...", icon: <WindowGlyph /> },
  { label: "Progress", icon: <WindowGlyph /> },
  { label: "CAM中心P...", icon: <Pic><Sheet /></Pic> },
  { label: "4v2jh07na...", icon: <Pic><Notepad /></Pic> },
  { label: "4V2JH07N...", icon: <Pic><Sheet /></Pic> },
  { label: "Graphic Edi...", icon: <WindowGlyph />, active: true },
];

const Handle = () => (
  <div className="flex items-center gap-[2px]">
    <span className="h-5 w-[2px] border-r border-l border-l-[#808080] border-r-white" />
    <span className="h-4 w-[3px] border border-t-white border-r-[#808080] border-b-[#808080] border-l-white" />
  </div>
);

function Taskbar() {
  return (
    <footer className={`${tahoma} flex h-[28px] items-center border-t border-white bg-[#d4d0c8] pt-px pr-[3px] pl-[2px] text-[11px] text-black`}>
      <button className="flex h-[22px] w-[50px] items-center gap-px border-2 border-t-white border-r-[#505050] border-b-[#505050] border-l-white pl-[2px] text-xs font-medium whitespace-nowrap">
        <Pic>
          <path d="M5 3q3-2 5 0v5q-3-2-5 0z" fill="#e02020" stroke="#000" strokeWidth=".7" />
          <path d="M10.500 3.500q3 1.500 5 0v5q-2 1.500-5 0z" fill="#10a030" stroke="#000" strokeWidth=".7" />
          <path d="M5 9q3-2 5 0v5q-3-2-5 0z" fill="#2040e0" stroke="#000" strokeWidth=".7" />
          <path d="M10.500 9.500q3 1.500 5 0v5q-2 1.500-5 0z" fill="#f0e020" stroke="#000" strokeWidth=".7" />
          <path d="M0 4h4M0 7h4" stroke="#e02020" strokeDasharray="2 1" strokeWidth="2" />
          <path d="M0 10h4M0 13h4" stroke="#2040e0" strokeDasharray="2 1" strokeWidth="2" />
        </Pic>
        开始
      </button>
      <div className="ml-1 flex items-center">
        <Handle />
        <div className="mr-[6px] ml-[6px] flex gap-2">
          <button aria-label="Browser" className="flex"><Pic><Globe /></Pic></button>
          <button aria-label="Show desktop" className="flex">
            <Pic>
              <rect x=".5" y="1.500" width="14" height="13" fill="#70b8e0" stroke="#205080" />
              <rect x="3" y="4" width="8" height="9" fill="#fff" stroke="#000" />
              <path d="M7 10l7-9 1.500 1.500L9 11z" fill="#f0c040" stroke="#000" strokeWidth=".7" />
            </Pic>
          </button>
          <button aria-label="Outlook" className="flex"><Pic><Clock /></Pic></button>
        </div>
        <Handle />
      </div>
      <div className="ml-1 flex min-w-0 flex-1 gap-[3px]">
        {tasks.map((task) => (
          <button
            key={task.label}
            className={`flex h-[22px] min-w-0 flex-1 items-center gap-px border-2 pl-[2px] whitespace-nowrap ${
              task.active
                ? "border-t-[#505050] border-r-white border-b-white border-l-[#505050] bg-[#ebe9e5]"
                : "border-t-white border-r-[#505050] border-b-[#505050] border-l-white"
            }`}
          >
            {task.icon}
            <span className="overflow-hidden">{task.label}</span>
          </button>
        ))}
      </div>
      <div className="ml-[15px] flex h-[22px] w-[147px] items-center gap-[2px] border border-t-[#808080] border-r-white border-b-white border-l-[#808080] pl-[3px]">
        <Pic>
          <path d="M1 9 8 1l7 6-8 8z" fill="#e8e020" stroke="#000" />
          <path d="M4 9l5-5M6 11l5-5M8 5l4 4" stroke="#605800" />
        </Pic>
        <Pic>
          <path d="M10 1v8L0 14z" fill="#e01818" />
          <path d="M10 7l6 7-5-1z" fill="#10c030" />
        </Pic>
        <Pic>
          <circle cx="8" cy="10" r="5.500" fill="#f0f0c0" stroke="#108090" strokeWidth="2" />
          <path d="M5 1h5v5H5z" fill="#f8d020" />
          <circle cx="8" cy="10" r="2.500" fill="#e02818" />
        </Pic>
        <Pic>
          <rect width="16" height="16" fill="#807840" />
          <circle cx="8" cy="8" r="5.500" fill="#a8a070" stroke="#e8e4d0" strokeWidth="1.500" />
          <path d="M8 5v3.500h3" fill="none" stroke="#fff" />
        </Pic>
        <Pic>
          <path d="M1 2q8 4 14 12M14 2Q6 7 2 14" fill="none" stroke="#701878" strokeWidth="2.500" />
        </Pic>
        <time className="ml-auto pr-[14px]">4:48</time>
      </div>
    </footer>
  );
}

export default function App() {
  return (
    <div className="flex min-h-screen flex-col bg-black text-black">
      <TitleBar />
      <Header />
      <div className="flex flex-1 border-t border-black">
        <LayerPanel />
        <BoardCanvas />
        <Sidebar />
      </div>
      <CommandRow />
      <StatusStrip />
      <Taskbar />
    </div>
  );
}
